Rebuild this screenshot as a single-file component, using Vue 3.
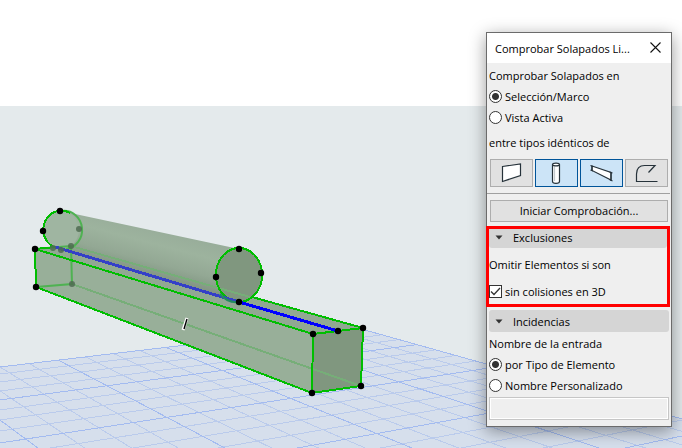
<script setup>
import { ref } from 'vue'

const scope = ref('selection')
const naming = ref('type')
const skipNonColliding = ref(true)
const customName = ref('')
const open = ref({ exclusions: true, issues: true })

const tools = ref([
  { id: 'wall', label: 'Muro', on: false },
  { id: 'column', label: 'Pilar', on: true },
  { id: 'beam', label: 'Viga', on: true },
  { id: 'slab', label: 'Forjado', on: false },
])

// Floor grid: every fourth line is a major one.
const backEdge = (x) => 367 - 0.121 * x
const sideEdge = (x) => 331 + 0.2775 * (x - 365)

const acrossLeft = [367, 374, 382, 391, 400, 410, 420, 431, 443, 456, 470, 486, 502, 520, 538, 558, 579]
const acrossRight = [347, 363, 380, 397, 415, 434, 454, 474, 495, 518, 542, 567, 593, 622, 652, 684, 717]
const depthTop = [-62, -30, 0, 29, 58, 85, 113, 139, 165, 189, 213, 236, 259, 281, 303, 325, 347]

const gridLines = [
  ...acrossLeft.map((y, i) => ({
    x1: 0, y1: y, x2: acrossRight[i], y2: sideEdge(acrossRight[i]), major: i % 4 === 0,
  })),
  ...depthTop.map((x, i) => ({
    x1: x, y1: backEdge(x), x2: 38 + i * 46.75, y2: 448, major: i % 4 === 0,
  })),
].sort((a, b) => a.major - b.major)

const nodes = [
  [60, 211], [43, 231], [35, 249], [36, 287], [239, 249], [216, 277], [261, 273],
  [239, 302], [313, 334], [338, 331], [363, 328], [312, 393], [361, 386],
]
const hiddenNodes = [[79, 229], [53, 248], [61, 250], [71, 246], [72, 284]]
</script>

<template>
  <main class="viewport">
    <svg class="scene" viewBox="0 0 682 448" preserveAspectRatio="xMinYMin slice" aria-hidden="true">
      <defs>
        <linearGradient id="tube" gradientUnits="userSpaceOnUse" x1="155" y1="228" x2="142" y2="278">
          <stop offset="0" stop-color="#98ad9a" />
          <stop offset="0.3" stop-color="#9db39e" />
          <stop offset="0.65" stop-color="#93a894" />
          <stop offset="1" stop-color="#7d917e" />
        </linearGradient>
      </defs>
      <rect width="682" height="448" fill="#ffffff" />
      <rect y="106" width="682" height="342" fill="#e4eaec" />
      <path d="M0 367 347 325 682 419V448H0Z" fill="#d6dfec" />
      <g shape-rendering="crispEdges">
        <line
          v-for="(l, i) in gridLines" :key="i"
          :x1="l.x1" :y1="l.y1" :x2="l.x2" :y2="l.y2"
          :stroke="l.major ? '#a3bbf0' : '#bacbec'"
        />
      </g>

      <path d="M35 249 71 246 363 328 361 386 312 393 36 287Z" fill="#98af99" />
      <path d="M35 249 71 246 363 328 313 334Z" fill="#91a892" />
      <path d="M313 334 363 328 361 386 312 393Z" fill="#80977f" />
      <path d="M61 211 239 249A23 27 0 0 0 239 302L61 250A19 20 0 0 1 61 211Z" fill="url(#tube)" />
      <ellipse cx="61" cy="230" rx="18" ry="19" fill="#9fb5a1" />
      <ellipse cx="239" cy="275" rx="23" ry="27" fill="#80977f" />

      <g fill="none" stroke="#76ae78" stroke-width="2" shape-rendering="crispEdges">
        <path d="M71 246 250 297" />
        <path d="M72 284 361 386" />
      </g>
      <g fill="none" stroke="#4fb252" stroke-width="2">
        <path d="M71 246 72 284 36 287M35 249 71 246" />
        <path d="M62 211A18 19 0 0 1 66 249" />
      </g>
      <g fill="none" stroke="#00be00" stroke-width="2" shape-rendering="crispEdges">
        <path d="M55 247 35 249 36 287 312 393 361 386 363 328 313 334 35 249M313 334 312 393M252 297 363 328" />
        <path d="M70 213A18 19 0 1 0 54 247" />
        <ellipse cx="239" cy="275" rx="23" ry="27" />
      </g>
      <path d="M55 247 239 302" stroke="#3440c8" stroke-width="3" shape-rendering="crispEdges" />
      <path d="M239 302 338 331" stroke="#0000ff" stroke-width="3" shape-rendering="crispEdges" />
      <path d="M220 294A23 27 0 0 0 239 302" fill="none" stroke="#218c60" stroke-width="2" />
      <circle v-for="(n, i) in hiddenNodes" :key="'h' + i" :cx="n[0]" :cy="n[1]" r="3" fill="#4f6b51" fill-opacity="0.85" />
      <circle v-for="(n, i) in nodes" :key="'n' + i" :cx="n[0]" :cy="n[1]" r="3.2" fill="#000000" />
      <path d="M183 330 187 318" stroke="#ffffff" stroke-width="3" />
      <path d="M184 329 187 319" stroke="#000000" stroke-width="1.4" />
    </svg>

    <section class="palette" aria-labelledby="palette-title">
      <header class="titlebar">
        <h1 id="palette-title">Comprobar Solapados Li...</h1>
        <button class="close" type="button" aria-label="Cerrar">
          <svg width="11" height="11" viewBox="0 0 11 11"><path d="M0.5 0.5 10.5 10.5M10.5 0.5 0.5 10.5" stroke="#111" stroke-width="1.1" /></svg>
        </button>
      </header>

      <fieldset class="group scope">
        <legend>Comprobar Solapados en</legend>
        <label class="choice"><input v-model="scope" type="radio" name="scope" value="selection" />Selección/Marco</label>
        <label class="choice"><input v-model="scope" type="radio" name="scope" value="view" />Vista Activa</label>
      </fieldset>

      <p class="caption">entre tipos idénticos de</p>
      <div class="tools">
        <button
          v-for="t in tools" :key="t.id" type="button" class="tool" :class="{ on: t.on }"
          :aria-label="t.label" :aria-pressed="t.on" @click="t.on = !t.on"
        >
          <svg width="24" height="24" viewBox="0 0 24 24" fill="none" stroke="#26323a" stroke-width="1.2">
            <path v-if="t.id === 'wall'" d="M2.5 5.5 20.500 3V14.5L2.5 20.5Z" fill="#fff" />
            <template v-else-if="t.id === 'column'">
              <path d="M7.500 3.5V20.5C7.500 23 14.5 23 14.5 20.5V3.5" fill="#fff" />
              <ellipse cx="11" cy="3.5" rx="3.5" ry="1.4" fill="#fff" />
              <path d="M9.500 6V20" stroke="#c4cace" />
            </template>
            <template v-else-if="t.id === 'beam'">
              <path d="M2 5 21 11.500V19L2 9.5Z" fill="#fff" />
              <path d="M0.500 4.5 3 5.500M0.500 9 3 10M2 5V10M19.500 11 22.500 12M19.500 18.5 22.500 20M21 11.500V20" />
            </template>
            <path v-else d="M22.500 20.500H1.500V13C1.500 7.500 4.500 4.500 9.500 4.500H20L13.500 11.500" />
          </svg>
        </button>
      </div>
      <hr />
      <button class="run" type="button">Iniciar Comprobación...</button>

      <section class="exclusions">
        <button class="fold" type="button" :aria-expanded="open.exclusions" @click="open.exclusions = !open.exclusions">
          <svg width="8" height="5" viewBox="0 0 8 5"><path d="M0.500 0.500H7.500L4 4.500Z" fill="#333" /></svg>Exclusiones
        </button>
        <template v-if="open.exclusions">
          <p class="caption">Omitir Elementos si son</p>
          <label class="choice check">
            <span class="box">
              <input v-model="skipNonColliding" type="checkbox" />
              <svg v-if="skipNonColliding" width="13" height="13" viewBox="0 0 13 13"><path d="M2 6.500 5 9.500 11 3" fill="none" stroke="#333" stroke-width="1.300" /></svg>
            </span>sin colisiones en 3D
          </label>
        </template>
      </section>

      <section class="issues">
        <button class="fold" type="button" :aria-expanded="open.issues" @click="open.issues = !open.issues">
          <svg width="8" height="5" viewBox="0 0 8 5"><path d="M0.500 0.500H7.500L4 4.500Z" fill="#333" /></svg>Incidencias
        </button>
        <template v-if="open.issues">
          <fieldset class="group">
            <legend>Nombre de la entrada</legend>
            <label class="choice"><input v-model="naming" type="radio" name="naming" value="type" />por Tipo de Elemento</label>
            <label class="choice"><input v-model="naming" type="radio" name="naming" value="custom" />Nombre Personalizado</label>
          </fieldset>
          <input v-model="customName" class="name" type="text" aria-label="Nombre Personalizado" :disabled="naming === 'type'" />
        </template>
      </section>
    </section>
  </main>
</template>

<style>
body {
  margin: 0;
}
</style>

<style scoped>
.viewport {
  position: relative;
  min-height: 100vh;
  overflow: hidden;
  font-family: "Open Sans", "Noto Sans", sans-serif;
  font-size: 11px;
  line-height: 21px;
  color: #000;
}
.scene {
  display: block;
  width: 100%;
  height: 100vh;
}
.palette {
  position: absolute;
  top: 32px;
  right: 10px;
  box-sizing: border-box;
  width: 186px;
  padding-bottom: 6px;
  border: 1px solid #6b6b6b;
  background: #efefef;
  box-shadow: 0 4px 16px rgba(0, 0, 0, 0.4);
}
.titlebar {
  display: flex;
  align-items: center;
  justify-content: space-between;
  height: 30px;
  padding: 0 8px;
  background: #fff;
}
h1 {
  margin: 0;
  font-size: 11px;
  font-weight: 400;
  white-space: nowrap;
}
button {
  margin: 0;
  padding: 0;
  border: 0;
  background: none;
  font: inherit;
  color: inherit;
}
.close {
  display: flex;
  padding: 0 2px 2px;
}
.group {
  margin: 0;
  padding: 0 2px;
  border: 0;
  min-width: 0;
}
.scope {
  margin-top: 2px;
}
legend {
  display: block;
  padding: 0;
}
.choice {
  display: flex;
  align-items: center;
  gap: 3px;
  height: 21px;
  white-space: nowrap;
}
input[type="radio"],
input[type="checkbox"] {
  appearance: none;
  flex: none;
  box-sizing: border-box;
  width: 13px;
  height: 13px;
  margin: 0;
  border: 1px solid #333;
  background: #fff;
}
input[type="radio"] {
  border-radius: 50%;
}
input[type="radio"]:checked {
  background: radial-gradient(circle, #333 3px, #fff 4px);
}
.caption {
  margin: 0;
  padding: 4px 2px 3px;
}
.tools {
  display: grid;
  grid-template-columns: repeat(4, 1fr);
  gap: 2px;
  margin: 3px 3px 6px;
}
.tool {
  display: flex;
  align-items: center;
  justify-content: center;
  height: 28px;
  border: 1px solid #adadad;
  background: #e1e1e1;
}
.tool.on {
  border-color: #005499;
  background: #cce4f7;
}
hr {
  margin: 0 1px 6px 0;
  border: 0;
  border-top: 1px solid #a0a0a0;
}
.run {
  display: block;
  box-sizing: border-box;
  width: calc(100% - 6px);
  height: 22px;
  margin: 0 3px 4px;
  border: 1px solid #adadad;
  background: #e1e1e1;
  line-height: 20px;
}
.exclusions {
  margin: 0 1px 3px -1px;
  border: 3px solid #f00;
}
.fold {
  display: flex;
  align-items: center;
  gap: 10px;
  width: 100%;
  height: 22px;
  padding-left: 6px;
  border-radius: 3px;
  background: #d5d5d5;
}
.exclusions .fold {
  box-sizing: border-box;
  height: 19px;
  padding-bottom: 2px;
  border-radius: 0 0 3px 3px;
}
.exclusions .caption {
  padding: 6px 0;
}
.check {
  margin-bottom: 2px;
}
.box {
  position: relative;
  display: flex;
}
.box svg {
  position: absolute;
  inset: 0;
  pointer-events: none;
}
.issues .fold {
  width: calc(100% - 4px);
  margin: 0 2px 1px;
}
.name {
  display: block;
  box-sizing: border-box;
  width: calc(100% - 4px);
  height: 23px;
  margin: 1px 2px 0;
  padding: 0 4px;
  border: 1px solid #c6c6c6;
  outline: 1px solid #fff;
  outline-offset: -2px;
  background: #efefef;
  font: inherit;
}
</style>
